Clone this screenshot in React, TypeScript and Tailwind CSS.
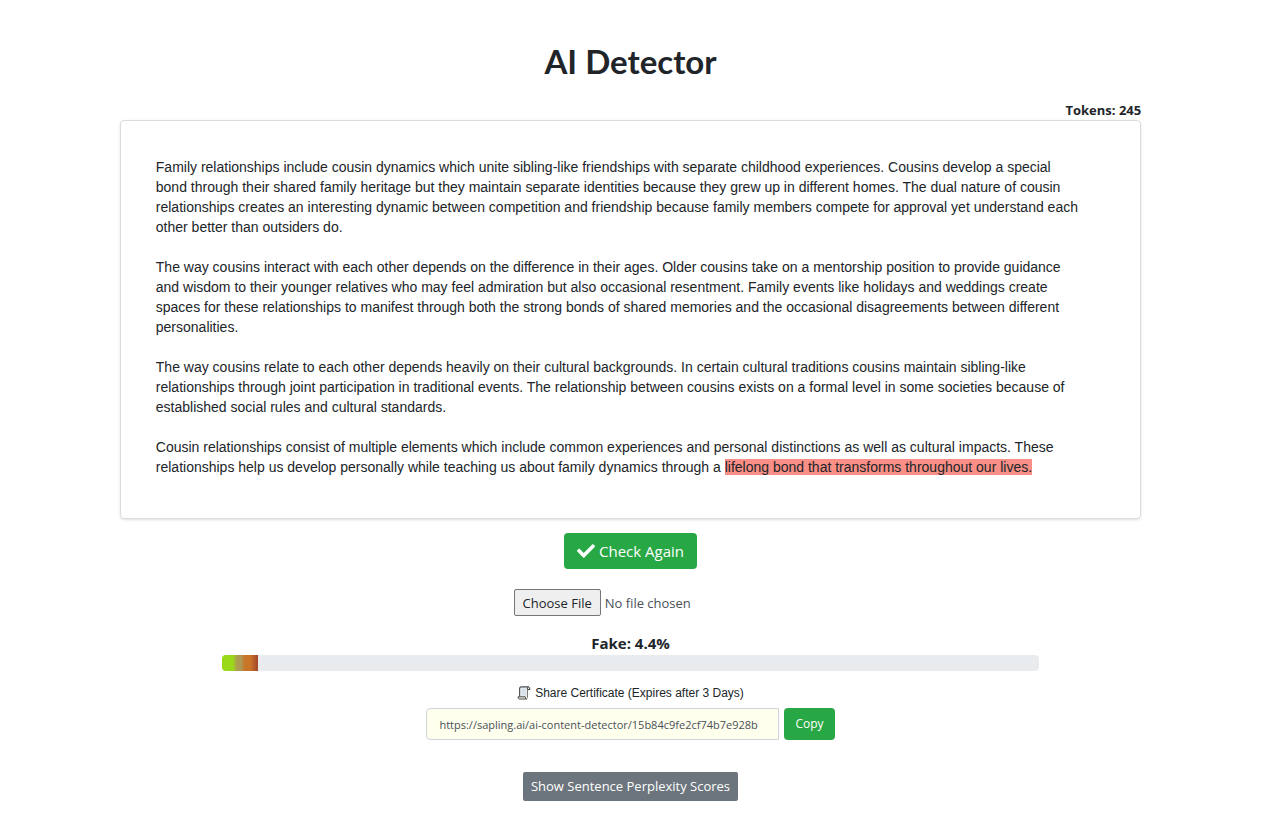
import { useState } from 'react';
import { FaCheck } from 'react-icons/fa';

const PARAGRAPHS = [
  'Family relationships include cousin dynamics which unite sibling-like friendships with separate childhood experiences. Cousins develop a special bond through their shared family heritage but they maintain separate identities because they grew up in different homes. The dual nature of cousin relationships creates an interesting dynamic between competition and friendship because family members compete for approval yet understand each other better than outsiders do.',
  'The way cousins interact with each other depends on the difference in their ages. Older cousins take on a mentorship position to provide guidance and wisdom to their younger relatives who may feel admiration but also occasional resentment. Family events like holidays and weddings create spaces for these relationships to manifest through both the strong bonds of shared memories and the occasional disagreements between different personalities.',
  'The way cousins relate to each other depends heavily on their cultural backgrounds. In certain cultural traditions cousins maintain sibling-like relationships through joint participation in traditional events. The relationship between cousins exists on a formal level in some societies because of established social rules and cultural standards.',
];

const SHARE_URL = 'https://sapling.ai/ai-content-detector/15b84c9fe2cf74b7e928b';

function ScrollIcon() {
  return (
    <svg className="h-[14px] w-[14px]" viewBox="0 0 14 14" fill="none" aria-hidden="true">
      <path d="M3 2Q3 0.9 4.2 0.9H11.6L10.6 2.4V11.2H2.2Z" fill="#e3eaf1" />
      <path d="M2.6 10.6V2.4Q2.8 0.9 4.2 0.9H11.6" stroke="#4a4e53" strokeWidth="1.1" />
      <path d="M10.5 3.6V2.2Q10.7 0.9 11.7 0.9Q12.9 1 12.8 3.6Z" fill="#f7f3e8" stroke="#33373b" strokeWidth="1" strokeLinejoin="round" />
      <path d="M10.5 3.6V11.4Q10.3 13 9.2 13" stroke="#7a7a72" strokeWidth="1" />
      <path d="M1 10.8H8.2Q8.2 13 9.4 13H2.4Q1 13 1 10.8Z" fill="#f7f3e8" stroke="#4a4a44" strokeWidth="1" strokeLinejoin="round" />
      <path d="M4.8 3.8H8.8M4.8 5.8H8.8M4.8 7.8H8.8" stroke="#ccd5df" strokeWidth="0.8" />
    </svg>
  );
}

export default function App() {
  const [score] = useState(4.4);

  return (
    <main className="flex flex-col items-center pt-[39px] pr-[9px] pb-9 font-['Open_Sans',sans-serif] text-[#212529]">
      <h1 className="font-['Lato',sans-serif] text-[33px] leading-[44px] font-bold">AI Detector</h1>

      <section className="mt-[17px] w-[81%]">
        <div className="text-right text-[13px] leading-5 font-bold">Tokens: 245</div>
        <div className="space-y-5 rounded border border-[#dcdcdc] pt-9 pr-[60px] pb-[41px] pl-[35px] font-['Liberation_Sans',sans-serif] text-sm leading-5 shadow-sm">
          {PARAGRAPHS.map((text, index) => (
            <p key={index}>{text}</p>
          ))}
          <p>
            Cousin relationships consist of multiple elements which include common experiences and personal distinctions as well as cultural impacts. These relationships help us develop personally while teaching us about family dynamics through a{' '}
            <mark className="bg-[#f98f86] text-inherit">lifelong bond that transforms throughout our lives.</mark>
          </p>
        </div>
      </section>

      <button className="mt-[14px] flex h-9 items-center gap-1 rounded bg-[#28a745] px-[13px] text-[15px] text-white">
        <FaCheck className="h-[18px] w-[18px]" />
        Check Again
      </button>

      <input
        type="file"
        aria-label="Choose a file to check"
        className="mt-5 w-[234px] text-[13px] leading-5 text-[#495057] file:mr-1 file:h-[27px] file:rounded-xs file:border file:border-solid file:border-[#767676] file:bg-[#efefef] file:px-2 file:text-[#212529]"
      />

      <div className="mt-[15px] text-[15px] leading-6 font-bold">Fake: {score}%</div>
      <div className="flex w-[81%] justify-center">
        <div className="flex h-4 w-[80%] overflow-hidden rounded bg-[#e9ecef]">
          <div
            className="bg-[linear-gradient(90deg,#9ad919_30%,#ae9a53_42%,#ae9a53_52%,#c87528_64%,#c87528_78%,#a3452b_100%)]"
            style={{ width: `${score}%` }}
          />
        </div>
      </div>

      <label htmlFor="share" className="mt-3 flex items-center gap-1 font-['Liberation_Sans',sans-serif] text-xs leading-5">
        <ScrollIcon />
        Share Certificate (Expires after 3 Days)
      </label>
      <div className="mt-[5px] flex gap-[5px]">
        <input
          id="share"
          readOnly
          value={SHARE_URL}
          className="h-8 w-[353px] rounded-l border border-[#ced4da] bg-[#ffffee] px-3 text-[11px] text-[#495057]"
        />
        <button className="h-8 rounded bg-[#28a745] px-[11px] text-xs text-white">Copy</button>
      </div>

      <button className="mt-8 h-[29px] rounded-xs bg-[#6c757d] px-2 text-[13px] text-white">Show Sentence Perplexity Scores</button>
    </main>
  );
}
